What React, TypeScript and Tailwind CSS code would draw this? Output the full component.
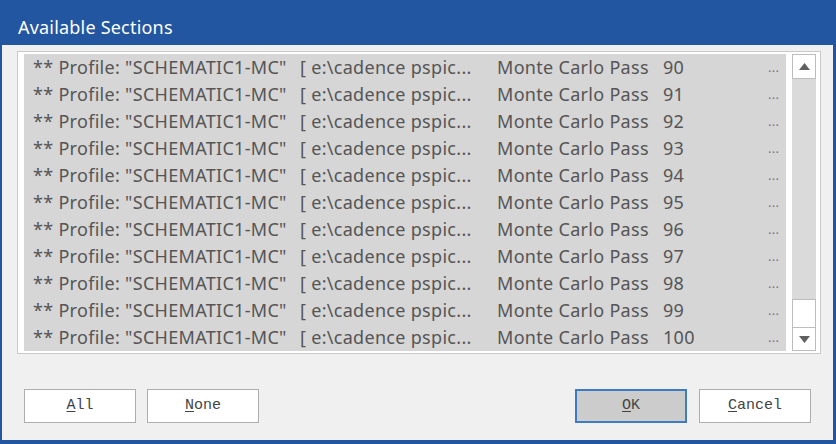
import React from 'react';

const rows = [90, 91, 92, 93, 94, 95, 96, 97, 98, 99, 100];

const DialogButton: React.FC<{ hot: string; rest: string; isDefault?: boolean }> = ({ hot, rest, isDefault }) => (
  <button
    className={
      'w-[112px] h-[34px] flex items-center justify-center text-[15px] text-[#444] ' +
      (isDefault ? 'bg-[#cccccc] border-2 border-[#3f7bc0]' : 'bg-white border border-[#adadad]')
    }
    style={{ fontFamily: '"Liberation Mono", "DejaVu Sans Mono", monospace' }}
  >
    <span className="underline underline-offset-2">{hot}</span>
    {rest}
  </button>
);

const App: React.FC = () => {
  return (
    <div
      className="w-[836px] h-[444px] bg-[#2356a0] pl-[2px] pr-[3px] pb-[4px] flex flex-col"
      style={{ fontFamily: '"Noto Sans", "Open Sans", sans-serif' }}
    >
      <div className="h-[45px] flex items-center pl-[16px] pt-[10px] text-white text-[18px] tracking-[0.2px]">Available Sections</div>

      <div className="flex-1 bg-[#f0f0f0] flex flex-col pl-[15px] pr-[12px] pt-[6px]">
        {/* list box */}
        <div className="h-[303px] border border-[#c9c9c9] bg-white flex pt-[2px] pl-[6px] pr-[4px]">
          <div className="w-[762px] h-[297px] bg-[#d6d6d6] text-[18px] tracking-[0.3px] text-[#555]">
            {rows.map(n => (
              <div key={n} className="h-[27px] flex items-center pl-[9px] whitespace-nowrap">
                <span className="w-[267px]">** Profile: "SCHEMATIC1-MC"</span>
                <span className="w-[197px]">[ e:\cadence pspic...</span>
                <span className="w-[166px]">Monte Carlo Pass</span>
                <span className="w-[105px]">{n}</span>
                <span className="text-[13px] text-[#777]">...</span>
              </div>
            ))}
          </div>

          {/* scrollbar */}
          <div className="ml-[6px] w-[24px] h-[297px] flex flex-col bg-[#dadada]">
            <div className="h-[25px] bg-white border border-[#bdbdbd] flex items-center justify-center">
              <svg width="11" height="7" viewBox="0 0 11 7"><path d="M5.5 0 L11 7 L0 7 Z" fill="#606060" /></svg>
            </div>
            <div className="flex-1" />
            <div className="h-[28px] bg-white border-x border-t border-[#bdbdbd]" />
            <div className="h-[24px] bg-white border border-[#bdbdbd] flex items-center justify-center">
              <svg width="11" height="7" viewBox="0 0 11 7"><path d="M0 0 L11 0 L5.5 7 Z" fill="#606060" /></svg>
            </div>
          </div>
        </div>

        {/* buttons */}
        <div className="flex items-center mt-[35px] pl-[7px] pr-[10px]">
          <div className="flex gap-[11px]">
            <DialogButton hot="A" rest="ll" />
            <DialogButton hot="N" rest="one" />
          </div>
          <div className="flex gap-[12px] ml-auto">
            <DialogButton hot="O" rest="K" isDefault />
            <DialogButton hot="C" rest="ancel" />
          </div>
        </div>
      </div>
    </div>
  );
};

export default App;
